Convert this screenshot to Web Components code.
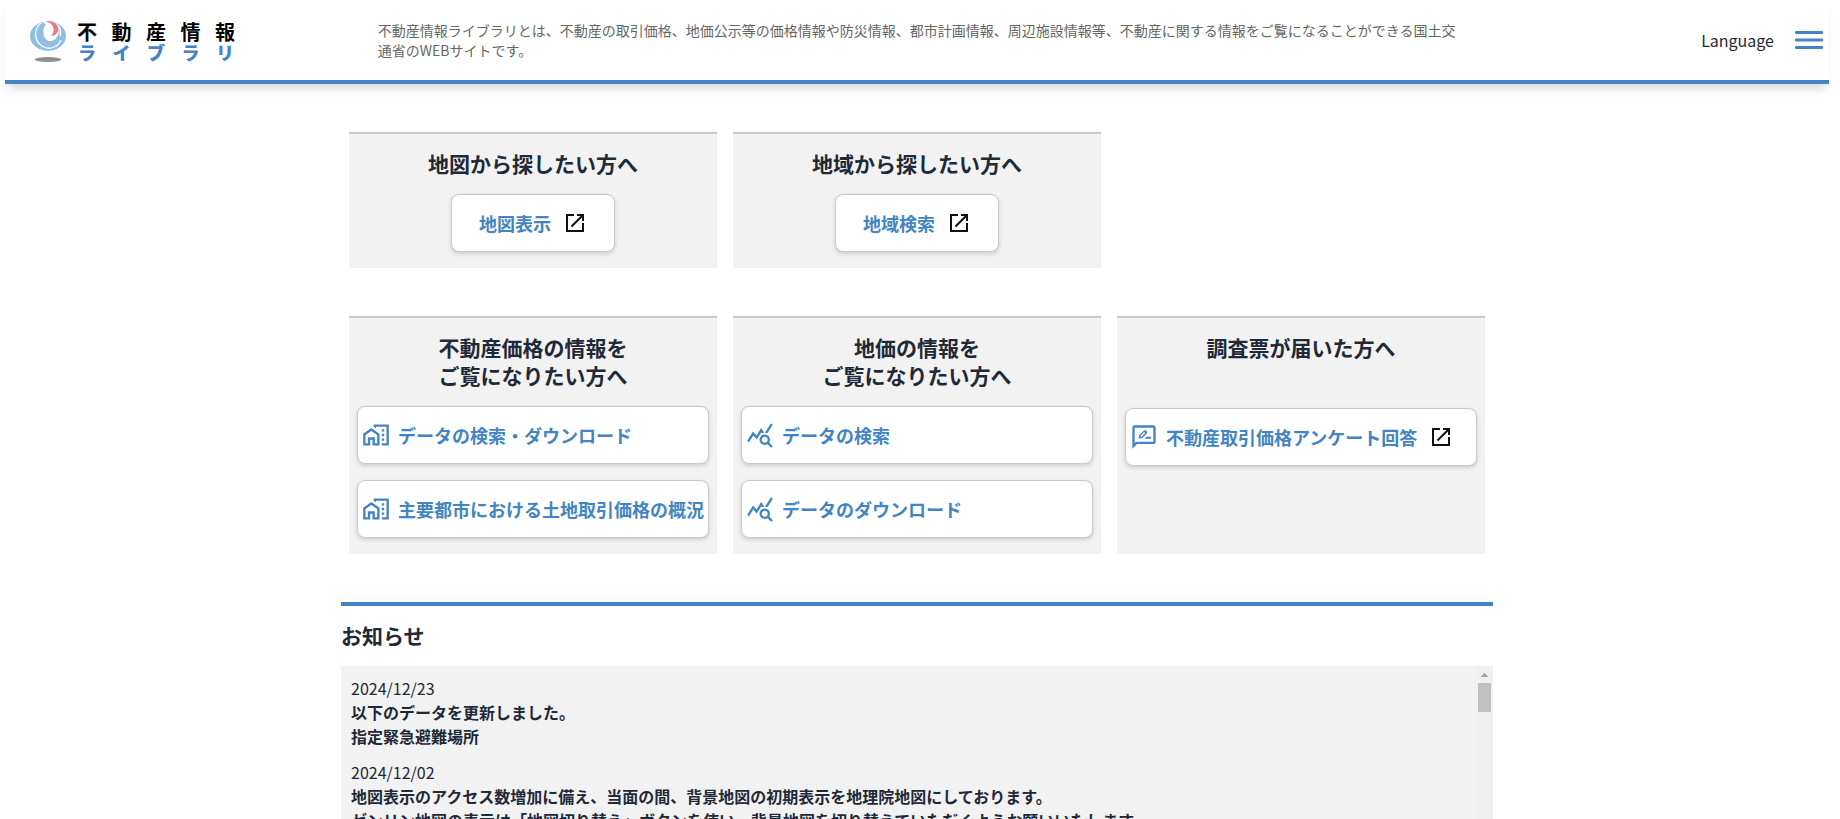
<!DOCTYPE html>
<html lang="ja">
<head>
<meta charset="utf-8">
<title>不動産情報ライブラリ</title>
<style>
  :root {
    --blue: #4285c2;
    --panel: #f2f2f2;
    --ink: #1f2937;
    scrollbar-width: none;
  }
  body {
    margin: 0;
    padding: 0 11px 0 5px;
    background: #fff;
    color: var(--ink);
    font: 16px/24px "Noto Sans CJK JP", "Noto Sans", sans-serif;
  }
</style>
</head>
<body>
<site-header></site-header>
<page-main>
  <card-row>
    <link-card heading="地図から探したい方へ" compact>
      <link-button compact external>地図表示</link-button>
    </link-card>
    <link-card heading="地域から探したい方へ" compact>
      <link-button compact external>地域検索</link-button>
    </link-card>
  </card-row>
  <card-row>
    <link-card heading="不動産価格の情報を|ご覧になりたい方へ">
      <link-button icon="home">データの検索・ダウンロード</link-button>
      <link-button icon="home">主要都市における土地取引価格の概況</link-button>
    </link-card>
    <link-card heading="地価の情報を|ご覧になりたい方へ">
      <link-button icon="stats">データの検索</link-button>
      <link-button icon="stats">データのダウンロード</link-button>
    </link-card>
    <link-card heading="調査票が届いた方へ" spaced>
      <link-button icon="survey" external>不動産取引価格アンケート回答</link-button>
    </link-card>
  </card-row>
  <news-panel>
    <news-item date="2024/12/23">以下のデータを更新しました。<br>指定緊急避難場所</news-item>
    <news-item date="2024/12/02">地図表示のアクセス数増加に備え、当面の間、背景地図の初期表示を地理院地図にしております。<br>ゼンリン地図の表示は「地図切り替え」ボタンを使い、背景地図を切り替えていただくようお願いいたします。</news-item>
  </news-panel>
</page-main>

<script>
const define = (name, render) => customElements.define(name, class extends HTMLElement {
  constructor() {
    super();
    this.attachShadow({ mode: 'open' });
  }
  connectedCallback() {
    this.shadowRoot.innerHTML = render(this);
  }
});

const spread = text => [...text].map(c => `<span>${c}</span>`).join('');

define('site-logo', () => `
  <style>
    :host { display: block; }
    a { display: flex; align-items: center; gap: 10px; color: #000; text-decoration: none; }
    svg { display: block; flex: none; }
    .name { display: block; width: 158px; font-weight: 700; line-height: 21px; }
    .row { display: flex; justify-content: space-between; }
    .top { font-size: 20px; }
    .sub { font-size: 18px; font-weight: 900; color: var(--blue); padding: 0 1px; }
  </style>
  <a href="#">
    <svg width="38" height="42" viewBox="0 0 38 42" aria-hidden="true">
      <defs><clipPath id="globe"><ellipse cx="19" cy="15" rx="18" ry="15"/></clipPath></defs>
      <g clip-path="url(#globe)">
        <rect width="38" height="31" fill="#90bfe6"/>
        <path d="M13 0h8c7 3 11 8 8 14-2 6-9 8-13 4-5-5-5-12-1-16z" fill="#fff"/>
        <path d="M13 2C6 8 6 20 16 25c7 3 14-1 16-7-4 4-9 5-13 2-6-4-6-12-2-17z" fill="#90bfe6"/>
        <path d="M13 1C5 7 4 19 13 25c8 5 16 1 19-6" fill="none" stroke="#fff" stroke-width="1.300"/>
        <path d="M15 0h6c8 2 12 8 10 15" fill="none" stroke="#fff" stroke-width="1.500"/>
        <path d="M16 0c4-1 9 0 12 4 3 5 1 10-6 11 5-5 3-13-6-15z" fill="#e87a80"/>
      </g>
      <ellipse cx="19" cy="38.500" rx="13" ry="2.500" fill="#8b8e8b"/>
    </svg>
    <span class="name"><span class="row top">${spread('不動産情報')}</span><span class="row sub">${spread('ライブラリ')}</span></span>
  </a>`);

define('site-header', () => `
  <style>
    :host {
      display: grid; grid-template-columns: 1fr 3fr 1fr; align-items: center;
      height: 80px; border-bottom: 4px solid var(--blue);
      box-shadow: 0 8px 8px -3px rgba(0, 0, 0, .14); background: #fff;
    }
    site-logo { padding: 3px 0 0 24px; }
    p { margin: 0; padding-left: 8px; font-size: 14px; line-height: 20px; color: #666; }
    nav { display: flex; justify-content: flex-end; align-items: center; gap: 21px; padding-right: 6px; }
    nav a { color: inherit; text-decoration: none; }
    button { display: block; padding: 0; border: 0; background: none; }
    svg { display: block; }
  </style>
  <site-logo></site-logo>
  <p>不動産情報ライブラリとは、不動産の取引価格、地価公示等の価格情報や防災情報、都市計画情報、周辺施設情報等、不動産に関する情報をご覧になることができる国土交通省のWEBサイトです。</p>
  <nav>
    <a href="#">Language</a>
    <button type="button" aria-label="メニュー">
      <svg width="28" height="20" viewBox="0 0 28 20" fill="#4285c2"><rect y="1" width="28" height="3" rx="1"/><rect y="8.500" width="28" height="3" rx="1"/><rect y="16" width="28" height="3" rx="1"/></svg>
    </button>
  </nav>`);

define('page-main', () => `
  <style>
    :host { display: block; max-width: 1152px; margin: 48px auto 0; }
    main { display: flex; flex-direction: column; gap: 48px; }
  </style>
  <main><slot></slot></main>`);

define('card-row', () => `
  <style>
    :host { display: grid; grid-template-columns: repeat(3, 1fr); gap: 16px; padding: 0 8px; }
  </style>
  <slot></slot>`);

define('link-card', el => `
  <style>
    :host { display: block; background: var(--panel); border-top: 2px solid #c8c8c8; padding: 15px 8px 16px; }
    h2 { margin: 0; font-size: 21px; line-height: 28px; font-weight: 700; text-align: center; }
    :host([spaced]) h2 { min-height: 58px; }
    .links { display: flex; flex-direction: column; gap: 16px; margin-top: 17px; }
    :host([compact]) .links { align-items: center; }
  </style>
  <h2>${el.getAttribute('heading').split('|').join('<br>')}</h2>
  <div class="links"><slot></slot></div>`);

const icons = {
  home: '<path d="M1 11v10h6v-5h2v5h6V11L8 6zm12 8h-2v-5H5v5H3v-7l5-3.500 5 3.500z"/><path d="M17 7h2v2h-2zM17 11h2v2h-2zM17 15h2v2h-2zM10 3v1.970l2 1.430V5h9v14h-4v2h6V3z"/>',
  stats: '<path d="M19.880 18.470c.44-.7.7-1.510.7-2.390 0-2.490-2.010-4.500-4.500-4.500s-4.500 2.010-4.500 4.500 2.010 4.500 4.490 4.500c.88 0 1.700-.26 2.390-.7L21.580 23 23 21.580zM16.080 18.580c-1.380 0-2.500-1.120-2.500-2.500s1.120-2.500 2.500-2.500 2.500 1.120 2.500 2.500-1.120 2.500-2.500 2.500zM15.720 10.080c-.74.02-1.450.18-2.100.45l-.55-.83-3.800 6.180-3.010-3.520-3.630 5.810L1 17l5-8 3 3.500L13 6zM18.310 10.580c-.64-.28-1.330-.45-2.050-.49L21.380 2 23 3.180z"/>',
  survey: '<path d="M20 2H4c-1.100 0-2 .9-2 2v18l4-4h14c1.100 0 2-.9 2-2V4c0-1.100-.9-2-2-2zm0 14H5.170L4 17.170V4h16z"/><path d="M7.400 13.300l.5-2.800L12 6.400c1.200-1 3.500 1 2.500 2.400l-4.200 4.300zM9 11.700h.9l3-3.100-.8-.8L9 10.900zM12.500 13.500l1.800-1.800H18v1.800z" fill-rule="evenodd"/>'
};

define('link-button', el => {
  const icon = icons[el.getAttribute('icon')];
  return `
  <style>
    :host { display: block; }
    a {
      box-sizing: border-box; display: flex; align-items: center; height: 58px; padding: 0 4px;
      border: 1px solid #c8c8c8; border-radius: 8px; background: #fff;
      box-shadow: 0 2px 4px rgba(0, 0, 0, .15);
      color: var(--blue); font-size: 18px; font-weight: 700; line-height: 28px;
      text-decoration: none; white-space: nowrap;
    }
    :host([compact]) a { padding: 0 27px; }
    svg { display: block; flex: none; }
    .lead { margin-right: 8px; fill: currentColor; }
    .out { margin-left: 12px; fill: #111; }
  </style>
  <a href="#">
    ${icon ? `<svg class="lead" width="28" height="28" viewBox="0 0 24 24">${icon}</svg>` : ''}
    <span><slot></slot></span>
    ${el.hasAttribute('external') ? '<svg class="out" width="24" height="24" viewBox="0 0 24 24"><path d="M19 19H5V5h6V3H3v18h18v-9h-2zM14 3v2h3.590l-9.830 9.830 1.410 1.410L19 6.410V10h2V3z"/></svg>' : ''}
  </a>`;
});

define('news-panel', () => `
  <style>
    :host { display: block; border-top: 4px solid var(--blue); padding-top: 15px; }
    h2 { margin: 0 0 17px; font-size: 21px; line-height: 28px; font-weight: 700; }
    .box { display: flex; height: 300px; background: var(--panel); }
    .list { flex: 1; min-width: 0; overflow: hidden; padding: 10px; display: flex; flex-direction: column; gap: 12px; }
    .bar { flex: none; width: 17px; background: #f0f0f0; }
    button { display: flex; width: 17px; height: 17px; padding: 0; border: 0; background: none; align-items: center; justify-content: center; }
    .thumb { height: 29px; margin: 0 2px; background: #c1c1c1; }
  </style>
  <h2>お知らせ</h2>
  <div class="box">
    <div class="list"><slot></slot></div>
    <div class="bar">
      <button type="button" aria-label="上へスクロール"><svg width="7" height="4" viewBox="0 0 7 4" shape-rendering="crispEdges"><path d="M3.500 0L7 4H0z" fill="#a3a3a3"/></svg></button>
      <div class="thumb"></div>
    </div>
  </div>`);

define('news-item', el => `
  <style>
    :host { display: block; }
    time { display: block; }
    p { margin: 0; font-weight: 700; }
  </style>
  <time>${el.getAttribute('date')}</time>
  <p><slot></slot></p>`);
</script>
</body>
</html>
